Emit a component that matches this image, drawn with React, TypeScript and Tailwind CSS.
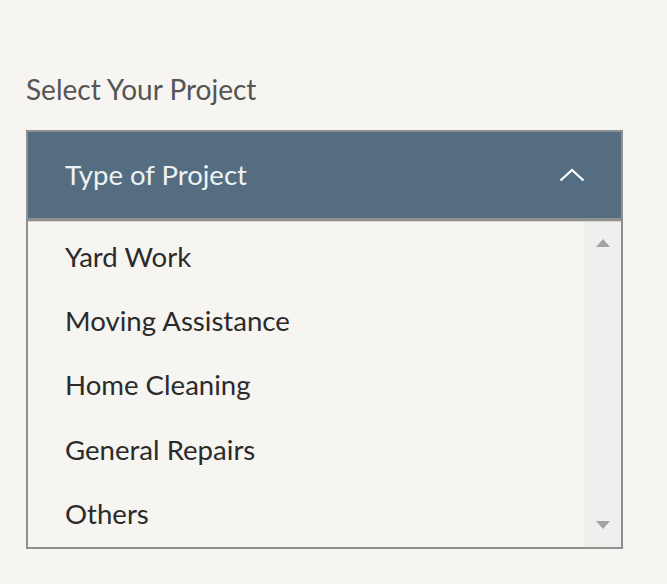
import React from "react";

const items = ["Yard Work", "Moving Assistance", "Home Cleaning", "General Repairs", "Others"];

export default function App() {
  return (
    <div
      className="w-full h-[584px] bg-[#f6f5f1] pt-[71px] pl-[26px]"
      style={{ fontFamily: "Lato, 'Noto Sans', sans-serif" }}
    >
      <div className="text-[28px] leading-[36px] text-[#555555]">Select Your Project</div>
      <div className="mt-[23px] w-[597px] border-2 border-[#8f8f8f]">
        <div className="h-[89px] bg-[#546d80] border-b-[3px] border-[#8f8f8f] flex items-center justify-between pl-[37px] pr-[36px]">
          <span className="text-[27.5px] text-[#eef2f4]">Type of Project</span>
          <svg width="26" height="14" viewBox="0 0 26 14" fill="none">
            <path d="M1.5 12.5 L13 2 L24.5 12.5" stroke="#ffffff" strokeWidth="2.2" />
          </svg>
        </div>
        <div className="flex border-t border-[#d6d6d4] h-[326px]">
          <div className="flex-1 pt-[2px]">
            {items.map((it) => (
              <div key={it} className="h-[64.4px] flex items-center pl-[37px] text-[27.6px] text-[#2b2b2b]">
                {it}
              </div>
            ))}
          </div>
          <div className="w-[37px] bg-[#efefee] flex flex-col justify-between items-center pt-[17px] pb-[18px]">
            <svg width="14" height="8" viewBox="0 0 14 8">
              <path d="M7 0 L14 8 L0 8 Z" fill="#a3a3a3" />
            </svg>
            <svg width="14" height="8" viewBox="0 0 14 8">
              <path d="M0 0 L14 0 L7 8 Z" fill="#a3a3a3" />
            </svg>
          </div>
        </div>
      </div>
    </div>
  );
}
